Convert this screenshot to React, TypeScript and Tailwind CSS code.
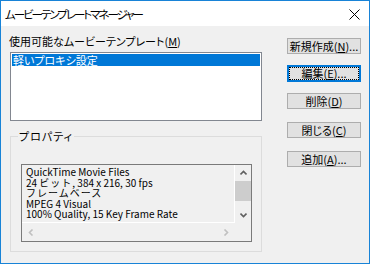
import React from "react";

const jp = "font-['Noto_Sans_CJK_JP',sans-serif] [font-feature-settings:'palt']";

function Btn({ label, u, rest, pre, focused, mt }: { label: string; u: string; rest: string; pre?: string; focused?: boolean; mt: string }) {
  if (focused) {
    return (
      <div className={`${mt} w-[74px] h-[17px] border-2 border-[#0078d7] bg-[#e1e1e1] flex p-0`}>
        <div className="flex-1 border border-dotted border-black flex items-center justify-center text-[11px] leading-[11px] text-black">
          <span>{label}{pre}<span className="underline underline-offset-1">{u}</span>{rest}</span>
        </div>
      </div>
    );
  }
  return (
    <div className={`${mt} w-[74px] h-[16px] border border-[#adadad] bg-[#e1e1e1] flex items-center justify-center text-[11px] leading-[11px] text-black`}>
      <span>{label}{pre}<span className="underline underline-offset-1">{u}</span>{rest}</span>
    </div>
  );
}

function Chevron({ dir, color }: { dir: "up" | "down" | "left" | "right"; color: string }) {
  const paths: Record<string, string> = {
    up: "M0.5 4.5 L3.5 1.5 L6.5 4.5",
    down: "M0.5 1.5 L3.5 4.5 L6.5 1.5",
    left: "M4.5 0.5 L1.5 3.5 L4.5 6.5",
    right: "M1.5 0.5 L4.5 3.5 L1.5 6.5",
  };
  const w = dir === "up" || dir === "down" ? 7 : 6;
  const h = dir === "up" || dir === "down" ? 6 : 7;
  return (
    <svg width={w} height={h} viewBox={`0 0 ${w} ${h}`}>
      <path d={paths[dir]} fill="none" stroke={color} strokeWidth="1.6" />
    </svg>
  );
}

const line = "h-[10.5px] leading-[10.5px]";
const jpSpan = "text-[10px] leading-[10.5px] tracking-[1px]";

export default function App() {
  return (
    <div className={`w-[370px] h-[264px] border border-[#1883d7] bg-[#f0f0f0] flex flex-col ${jp} text-black`}>
      <div className="h-[25px] bg-white flex items-center justify-between pl-[4px] pr-[9px]">
        <span className="text-[11.5px] leading-[14px] tracking-[-2px] mt-[1px]">ムービーテンプレートマネージャー</span>
        <svg width="11" height="11" viewBox="0 0 11 11" className="mt-[1px]">
          <path d="M0.5 0.5 L10.5 10.5 M10.5 0.5 L0.5 10.5" stroke="#000" strokeWidth="1" />
        </svg>
      </div>
      <div className="flex flex-1">
        <div className="w-[261px] pl-[9px] pt-[8px] flex flex-col">
          <div className="text-[11px] leading-[14px] -ml-[1px]">
            使用可能なムービーテンプレート(<span className="underline underline-offset-1">M</span>)
          </div>
          <div className="mt-[4px] w-[252px] h-[69px] border border-[#828790] bg-white p-[1px]">
            <div className="h-[12px] bg-[#0078d7] text-white text-[11px] leading-[12px] pl-[1px]">軽いプロキシ設定</div>
          </div>
          <fieldset className="mt-[8px] w-[252px] border border-[#dcdcdc] pl-[10px] pb-[9px]">
            <legend className="-ml-[3px] px-[1px] text-[11px] leading-[14px] tracking-[1px]">プロパティ</legend>
            <div className="mt-[21px] w-[231px] h-[78px] border border-[#7a7a7a] flex flex-col">
              <div className="flex h-[58px]">
                <div className="flex-1 border-r border-b border-white pl-[4px] pt-[2px] overflow-hidden whitespace-nowrap font-['Noto_Sans_CJK_JP',sans-serif] [font-feature-settings:normal] text-[10px] leading-[10.5px]">
                  <div className={line}>QuickTime Movie Files</div>
                  <div className={line}>24 <span className={jpSpan}>ビット</span>, 384 x 216, 30 fps</div>
                  <div className={line}><span className={jpSpan}>フレームベース</span></div>
                  <div className={line}>MPEG 4 Visual</div>
                  <div className={line}>100% Quality, 15 Key Frame Rate</div>
                </div>
                <div className="w-[16px] flex flex-col">
                  <div className="h-[16px] flex items-center justify-center"><Chevron dir="up" color="#606060" /></div>
                  <div className="h-[20px] bg-[#cdcdcd]"></div>
                  <div className="flex-1"></div>
                  <div className="h-[16px] flex items-center justify-center"><Chevron dir="down" color="#606060" /></div>
                </div>
              </div>
              <div className="flex-1 flex items-center">
                <div className="w-[212px] flex items-center justify-between pl-[6px] pr-[5px]">
                  <Chevron dir="left" color="#c0c0c0" />
                  <Chevron dir="right" color="#c0c0c0" />
                </div>
              </div>
            </div>
          </fieldset>
        </div>
        <div className="ml-[25px] pt-[12px] flex flex-col">
          <Btn mt="mt-0" label="新規作成" pre="(" u="N" rest=")..." />
          <Btn mt="mt-[11px]" label="編集" pre="(" u="E" rest=")..." focused />
          <Btn mt="mt-[11px]" label="削除" pre="(" u="D" rest=")" />
          <Btn mt="mt-[13px]" label="閉じる" pre="(" u="C" rest=")" />
          <Btn mt="mt-[13px]" label="追加" pre="(" u="A" rest=")..." />
        </div>
      </div>
    </div>
  );
}
